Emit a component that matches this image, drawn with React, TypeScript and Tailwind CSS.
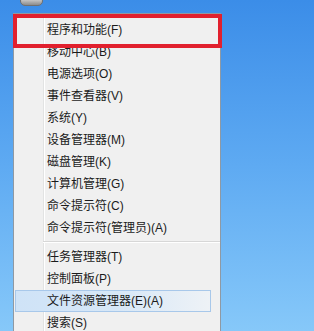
import React from 'react';

const groupA = [
  '程序和功能(F)',
  '移动中心(B)',
  '电源选项(O)',
  '事件查看器(V)',
  '系统(Y)',
  '设备管理器(M)',
  '磁盘管理(K)',
  '计算机管理(G)',
  '命令提示符(C)',
  '命令提示符(管理员)(A)',
];

const groupB = ['任务管理器(T)', '控制面板(P)', '文件资源管理器(E)(A)', '搜索(S)'];

function Item({ label, active }: { label: string; active?: boolean }) {
  return (
    <div className="relative h-[22px] flex items-center pl-[33px]">
      {active && (
        <div className="absolute left-[1px] right-[9px] top-0 bottom-0 border border-[#a8c8ea] bg-gradient-to-r from-[#cfe3f7] via-[#d6e7f7] to-[#eef2f6]"></div>
      )}
      <span className="relative text-[12px] leading-none text-[#1b1b1b]">{label}</span>
    </div>
  );
}

export default function App() {
  return (
    <div
      className="relative w-[314px] h-[331px] overflow-hidden bg-gradient-to-b from-[#3b8de8] via-[#5eaaf2] to-[#86c8f9]"
      style={{ fontFamily: '"Liberation Sans", "Noto Sans CJK SC", sans-serif' }}
    >
      {/* desktop icon peeking at top */}
      <div className="absolute left-[20px] top-[-4px] w-[23px] h-[10px] rounded-full bg-gradient-to-b from-[#e8e8e8] to-[#8c8c8c] border border-[#707070]"></div>

      <div className="relative ml-[13px] mt-[13px] w-[208px] h-[330px] border border-[#8f99a3] bg-[#f0f0f0] pt-[5px]">
        <div className="absolute left-[29px] top-0 bottom-0 w-px bg-[#e2e3e3]"></div>
        <div className="absolute left-[30px] top-0 bottom-0 w-px bg-white"></div>

        {groupA.map((label) => (
          <Item key={label} label={label} />
        ))}

        <div className="relative h-[7px] pl-[29px] pt-[2px]">
          <div className="h-px bg-[#d7d7d7]"></div>
          <div className="h-px bg-white"></div>
        </div>

        {groupB.map((label) => (
          <Item key={label} label={label} active={label.startsWith('文件')} />
        ))}
      </div>

      {/* red annotation box */}
      <div className="absolute left-[13px] top-[14px] w-[209px] h-[34px] border-4 border-[#e1202e]"></div>
    </div>
  );
}
